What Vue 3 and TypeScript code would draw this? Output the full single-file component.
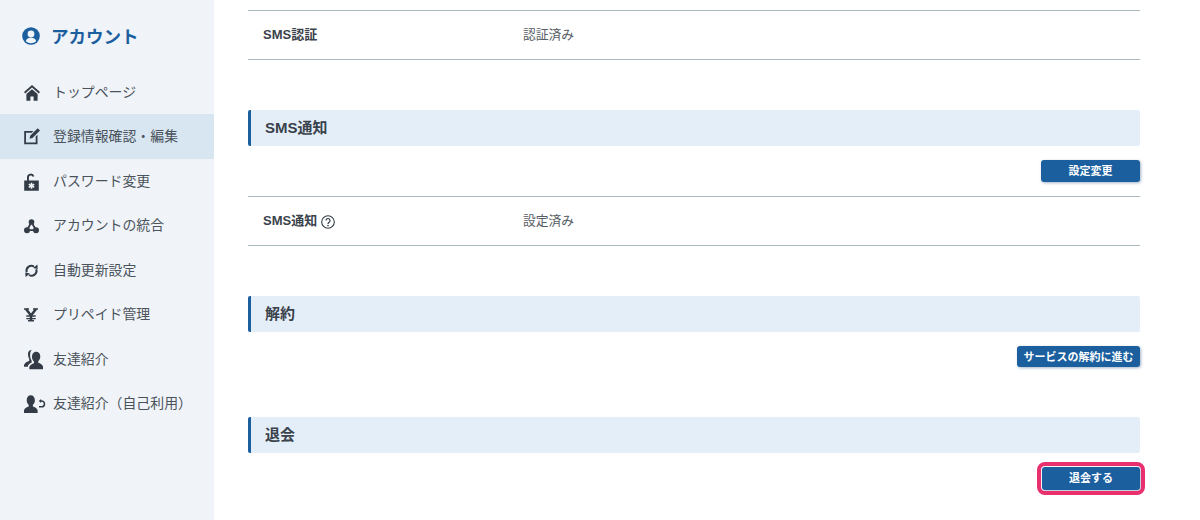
<script setup lang="ts">
interface NavItem { label: string; icon: string; active?: boolean }
const nav: NavItem[] = [
  { label: 'トップページ', icon: 'home' },
  { label: '登録情報確認・編集', icon: 'edit', active: true },
  { label: 'パスワード変更', icon: 'lock' },
  { label: 'アカウントの統合', icon: 'merge' },
  { label: '自動更新設定', icon: 'sync' },
  { label: 'プリペイド管理', icon: 'yen' },
  { label: '友達紹介', icon: 'friend' },
  { label: '友達紹介（自己利用）', icon: 'self' },
]
</script>

<template>
  <div class="page">
    <aside class="side">
      <h1 class="side-title">
        <svg class="title-icon" viewBox="0 0 18 18" width="18" height="18">
          <circle cx="9" cy="9" r="8.8" fill="#1c5f9f" />
          <circle cx="9" cy="7" r="3.400" fill="#f0f4f8" />
          <path d="M3.800 14.300c.6-2.600 2.700-3.500 5.200-3.500s4.600.9 5.200 3.500c-1.400 1.200-3.200 1.900-5.200 1.900s-3.800-.7-5.200-1.900z" fill="#f0f4f8" />
        </svg>
        <span>アカウント</span>
      </h1>
      <ul class="nav">
        <li v-for="item in nav" :key="item.label" class="nav-item" :class="{ active: item.active }">
          <span class="nav-icon">
            <svg class="nav-svg" viewBox="0 0 20 20" width="20" height="20" fill="#333c46">
              <template v-if="item.icon === 'home'">
                <path d="M9 3 1 10l1.200 1.400L9 5.500l6.800 5.900L17 10z" />
                <path d="M9 7.300 3.400 12.100v6.700h4v-4.200h3.200v4.200h4v-6.700z" />
              </template>
              <template v-else-if="item.icon === 'edit'">
                <path d="M1.200 5h9.300l-1.800 1.800H3v9.600h9.700v-5.800l1.800-1.800v9.400H1.200z" />
                <path d="M14.700 2.300 17 4.600 9.500 12.100l-3 .7.700-3z" />
              </template>
              <template v-else-if="item.icon === 'lock'">
                <path d="M4 10V6.500a3.800 3.800 0 0 1 7.400-1.300l-1.800.6A1.900 1.900 0 0 0 5.900 6.500V10z" />
                <path fill-rule="evenodd" d="M1.200 9.600h14.600v10.200H1.200zM7.700 11.700v1.700l-1.500-.9-.8 1.300 1.500.9-1.500.9.800 1.300 1.500-.9v1.700h1.600V16l1.500.9.800-1.300-1.500-.9 1.500-.9-.8-1.300-1.500.9v-1.700z" />
              </template>
              <template v-else-if="item.icon === 'merge'">
                <circle cx="8.500" cy="7" r="2.800" />
                <circle cx="4" cy="15.200" r="3" />
                <circle cx="13" cy="15.200" r="3" />
                <path d="M8.500 7 4 15.200h9z" fill="none" stroke="#333c46" stroke-width="1.800" />
              </template>
              <template v-else-if="item.icon === 'sync'">
                <path d="M3.700 12.300A5 5 0 0 1 11 6.500" fill="none" stroke="#333c46" stroke-width="2" />
                <path d="M14.400 4.600 14.700 9 10 8z" />
                <path d="M13.300 9.200A5 5 0 0 1 6 15" fill="none" stroke="#333c46" stroke-width="2" />
                <path d="M2.600 16.900 2.300 12.500 7 13.500z" />
              </template>
              <template v-else-if="item.icon === 'yen'">
                <g fill="none" stroke="#333c46">
                  <path d="M3 5 8 11.500 13 5" stroke-width="2.500" />
                  <path d="M8 11v6" stroke-width="2.500" />
                  <path d="M3.300 12h9.400M3.300 14.600h9.400M1 5h5M10 5h5M5 16.800h6" stroke-width="1.400" />
                </g>
              </template>
              <template v-else-if="item.icon === 'friend'">
                <path d="M13 2.800c2.600 0 4.300 2 4.300 4.700 0 2-.9 3.800-2 4.600v1.700c1.700.7 3.900 1.300 4.700 3.700v2.700H6.300V18c.8-2.400 3-3 4.700-3.700v-1.700c-1.100-.8-2-2.600-2-4.600 0-2.700 1.400-5.200 4-5.200z" />
                <path d="M8.800.8C6.400 1 5 2.700 5 5c0 1.900.4 3.500 1.200 4.700v2.200c-2 .7-4.300 1.500-5.200 4v1.800h3.800c.3-2.100 1.700-3.200 3.800-3.900v-2.200C7.500 10.300 7.100 8.100 7.100 6.100c0-2.200.6-4 1.700-5.300z" />
              </template>
              <template v-else>
                <path d="M7.700 2.300c2.600 0 4.200 2.100 4.200 4.900 0 2-.9 3.700-2 4.600v1.700c1.700.7 4 1.300 4.700 3.700v2.900H1v-2.900c.7-2.400 3-3 4.700-3.700v-1.700c-1.100-.9-2-2.600-2-4.600 0-2.800 1.500-4.900 4-4.900z" />
                <path d="M17.500 8h1.100a2.700 2.700 0 0 1 0 5.800H16" fill="none" stroke="#333c46" stroke-width="1.500" />
                <path d="M15.800 8l2.300-1.900v3.800z" />
              </template>
            </svg>
          </span>
          <span class="nav-label">{{ item.label }}</span>
        </li>
      </ul>
    </aside>

    <main class="main">
      <div class="row">
        <div class="row-key">SMS認証</div>
        <div class="row-val">認証済み</div>
      </div>

      <h2 class="head gap">SMS通知</h2>
      <div class="actions"><button class="btn" type="button">設定変更</button></div>
      <div class="row tight">
        <div class="row-key">
          SMS通知
          <svg class="help" viewBox="0 0 14 14" width="14" height="14">
            <circle cx="7" cy="7" r="6.300" fill="none" stroke="#333c46" stroke-width="1.100" />
            <path d="M5 5.500a2 2 0 1 1 3.100 1.700C7.400 7.700 7 8 7 9" fill="none" stroke="#333c46" stroke-width="1.200" />
            <circle cx="7" cy="10.600" r=".8" fill="#333c46" />
          </svg>
        </div>
        <div class="row-val">設定済み</div>
      </div>

      <h2 class="head gap">解約</h2>
      <div class="actions"><button class="btn small" type="button">サービスの解約に進む</button></div>

      <h2 class="head gap">退会</h2>
      <div class="actions"><button class="btn marked" type="button">退会する</button></div>
    </main>
  </div>
</template>

<style>
html, body { margin: 0; background: #fff; }
</style>

<style scoped>
.page {
  display: flex;
  width: 1200px;
  height: 520px;
  overflow: hidden;
  font-family: "Liberation Sans", "Noto Sans CJK JP", sans-serif;
  color: #3a424b;
}
.side {
  flex: 0 0 214px;
  background: #f0f4f8;
}
.side-title {
  display: flex;
  align-items: center;
  gap: 11px;
  height: 67.500px;
  margin: 0;
  padding: 2px 0 0 22px;
  font-size: 17.500px;
  font-weight: 700;
  color: #1c5f9f;
}
.nav {
  list-style: none;
  margin: 0;
  padding: 0;
}
.nav-item {
  display: flex;
  align-items: center;
  height: 44.500px;
  padding-left: 23px;
  font-size: 13.900px;
  color: #4a525b;
}
.nav-item.active { background: #d8e6f2; }
.nav-icon {
  display: flex;
  flex: 0 0 20px;
  margin-right: 10px;
}
.nav-svg { overflow: visible; }
.nav-label { padding-bottom: 2px; }
.main {
  flex: 0 0 892px;
  margin-left: 34px;
  padding-top: 10px;
}
.row {
  display: flex;
  align-items: center;
  height: 50px;
  padding-bottom: 3px;
  box-sizing: border-box;
  border-top: 1px solid #a9b9bf;
  border-bottom: 1px solid #a9b9bf;
  font-size: 12.750px;
}
.row.tight { margin-top: 14px; }
.row-key {
  display: flex;
  align-items: center;
  gap: 4px;
  width: 275px;
  padding-left: 15px;
  box-sizing: border-box;
  font-size: 13px;
  font-weight: 700;
  color: #3a424b;
}
.help { margin-top: 4px; }
.row-val { color: #555c64; }
.head {
  display: flex;
  align-items: center;
  height: 35.500px;
  box-sizing: border-box;
  margin: 0;
  padding: 0 0 3px 14px;
  background: #e4eef9;
  border-left: 3px solid #1c5f9f;
  border-radius: 2px;
  font-size: 15px;
  font-weight: 700;
  color: #3a424b;
}
.head.gap { margin-top: 50px; }
.actions {
  display: flex;
  justify-content: flex-end;
  margin-top: 14.500px;
}
.btn {
  display: block;
  width: 99px;
  height: 22px;
  padding: 0 0 2px;
  border: 0;
  border-radius: 3px;
  background: #1c5f9f;
  box-shadow: 1px 1px 3px rgba(28, 70, 120, 0.4);
  color: #fff;
  font-family: inherit;
  font-size: 11px;
  font-weight: 700;
}
.btn.small { width: 123px; height: 21px; font-size: 11px; }
.btn.marked {
  width: 98px;
  height: 23px;
  padding-bottom: 4px;
  outline: 4px solid #e8306f;
  outline-offset: 1px;
}
</style>
